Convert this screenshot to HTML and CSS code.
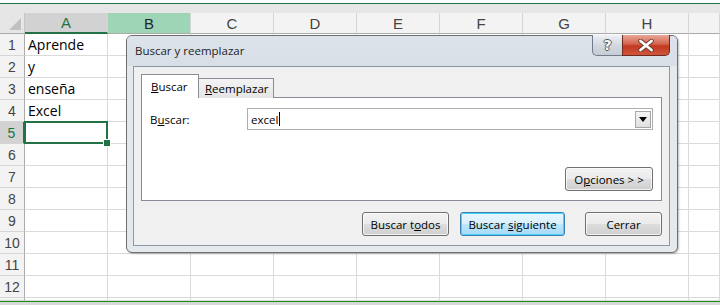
FILE: index.html
```html
<!DOCTYPE html>
<html>
    <head>
        <title>Buscar y reemplazar</title>
        <link rel="stylesheet" href="styles.css">
    </head>
    <body>
        <div class="sheet">
            <div class="ribbon-edge"></div>
            <div class="grid">
                <div class="corner"><span class="tri"></span></div>
                <div class="colhead active">A</div>
                <div class="colhead hover">B</div>
                <div class="colhead">C</div>
                <div class="colhead">D</div>
                <div class="colhead">E</div>
                <div class="colhead">F</div>
                <div class="colhead">G</div>
                <div class="colhead">H</div>
                <div class="colhead"></div>

                <div class="rowhead">1</div><div class="cell">Aprende</div><div class="cell"></div><div class="cell"></div><div class="cell"></div><div class="cell"></div><div class="cell"></div><div class="cell"></div><div class="cell"></div><div class="cell"></div>
                <div class="rowhead">2</div><div class="cell">y</div><div class="cell"></div><div class="cell"></div><div class="cell"></div><div class="cell"></div><div class="cell"></div><div class="cell"></div><div class="cell"></div><div class="cell"></div>
                <div class="rowhead">3</div><div class="cell">enseña</div><div class="cell"></div><div class="cell"></div><div class="cell"></div><div class="cell"></div><div class="cell"></div><div class="cell"></div><div class="cell"></div><div class="cell"></div>
                <div class="rowhead">4</div><div class="cell">Excel</div><div class="cell"></div><div class="cell"></div><div class="cell"></div><div class="cell"></div><div class="cell"></div><div class="cell"></div><div class="cell"></div><div class="cell"></div>
                <div class="rowhead active">5</div><div class="cell selected"></div><div class="cell"></div><div class="cell"></div><div class="cell"></div><div class="cell"></div><div class="cell"></div><div class="cell"></div><div class="cell"></div><div class="cell"></div>
                <div class="rowhead">6</div><div class="cell"></div><div class="cell"></div><div class="cell"></div><div class="cell"></div><div class="cell"></div><div class="cell"></div><div class="cell"></div><div class="cell"></div><div class="cell"></div>
                <div class="rowhead">7</div><div class="cell"></div><div class="cell"></div><div class="cell"></div><div class="cell"></div><div class="cell"></div><div class="cell"></div><div class="cell"></div><div class="cell"></div><div class="cell"></div>
                <div class="rowhead">8</div><div class="cell"></div><div class="cell"></div><div class="cell"></div><div class="cell"></div><div class="cell"></div><div class="cell"></div><div class="cell"></div><div class="cell"></div><div class="cell"></div>
                <div class="rowhead">9</div><div class="cell"></div><div class="cell"></div><div class="cell"></div><div class="cell"></div><div class="cell"></div><div class="cell"></div><div class="cell"></div><div class="cell"></div><div class="cell"></div>
                <div class="rowhead">10</div><div class="cell"></div><div class="cell"></div><div class="cell"></div><div class="cell"></div><div class="cell"></div><div class="cell"></div><div class="cell"></div><div class="cell"></div><div class="cell"></div>
                <div class="rowhead">11</div><div class="cell"></div><div class="cell"></div><div class="cell"></div><div class="cell"></div><div class="cell"></div><div class="cell"></div><div class="cell"></div><div class="cell"></div><div class="cell"></div>
                <div class="rowhead">12</div><div class="cell"></div><div class="cell"></div><div class="cell"></div><div class="cell"></div><div class="cell"></div><div class="cell"></div><div class="cell"></div><div class="cell"></div><div class="cell"></div>
                <div class="rowhead"></div><div class="cell"></div><div class="cell"></div><div class="cell"></div><div class="cell"></div><div class="cell"></div><div class="cell"></div><div class="cell"></div><div class="cell"></div><div class="cell"></div>
            </div>
            <div class="status-edge"></div>
        </div>

        <div class="dialog">
            <div class="titlebar">
                <span class="title">Buscar y reemplazar</span>
                <div class="caption-buttons">
                    <div class="cap help">?</div>
                    <div class="cap close">
                        <svg width="18" height="13" viewBox="0 0 18 13">
                            <path d="M3.5 2 L14.5 11 M14.5 2 L3.5 11" stroke="#6a3a30" stroke-width="4.6" stroke-linecap="round"/>
                            <path d="M3.5 2 L14.5 11 M14.5 2 L3.5 11" stroke="#ffffff" stroke-width="2.8" stroke-linecap="round"/>
                        </svg>
                    </div>
                </div>
            </div>
            <div class="client">
                <div class="tabs">
                    <div class="tab current"><span><u>B</u>uscar</span></div>
                    <div class="tab"><span><u>R</u>eemplazar</span></div>
                </div>
                <div class="panel">
                    <div class="find-row">
                        <label class="label">B<u>u</u>scar:</label>
                        <div class="combo">
                            <span class="value">excel<span class="caret"></span></span>
                            <span class="drop">
                                <svg width="8" height="5" viewBox="0 0 8 5"><path d="M0 0 H8 L4 5 Z" fill="#000"/></svg>
                            </span>
                        </div>
                    </div>
                    <div class="options-row">
                        <div class="button options"><span>O<u>p</u>ciones &gt; &gt;</span></div>
                    </div>
                </div>
                <div class="actions">
                    <div class="button all"><span>Buscar t<u>o</u>dos</span></div>
                    <div class="button next focus"><span>Buscar <u>s</u>iguiente</span></div>
                    <div class="button closebtn"><span>Cerrar</span></div>
                </div>
            </div>
        </div>
    </body>
</html>
```

FILE: styles.css
```css
html, body {
    margin: 0;
    padding: 0;
    background-color: white;
}
body {
    width: 720px;
    height: 305px;
    overflow: hidden;
    position: relative;
    font-family: "Open Sans", sans-serif;
}
.sheet {
    display: flex;
    flex-direction: column;
    height: 305px;
}
.ribbon-edge {
    height: 9px;
    margin-top: 3px;
    border-top: 1px solid #217346;
    background-color: #e6e6e6;
}
.grid {
    display: grid;
    grid-template-columns: 25px repeat(8, 83px) 1fr;
    grid-template-rows: 21px repeat(12, 22px) 3px;
    overflow: hidden;
    height: 288px;
}
.corner {
    background-color: #e6e6e6;
    border-right: 1px solid #c6c6c6;
    border-bottom: 1px solid #ababab;
    position: relative;
}
.tri {
    position: absolute;
    right: 3px;
    bottom: 3px;
    width: 0;
    height: 0;
    border-left: 12px solid transparent;
    border-bottom: 12px solid #c1c1c1;
}
.colhead {
    box-sizing: border-box;
    background-color: #f3f3f3;
    border-right: 1px solid #d5d5d5;
    border-bottom: 1px solid #ababab;
    color: #444;
    font-family: "Liberation Sans", sans-serif;
    font-size: 15px;
    display: flex;
    align-items: center;
    justify-content: center;
}
.colhead.active {
    background-color: #d2d2d2;
    color: #217346;
    border-bottom: 2px solid #217346;
}
.colhead.hover {
    background-color: #9fd5b7;
    color: #262626;
}
.rowhead {
    box-sizing: border-box;
    background-color: #f3f3f3;
    border-right: 1px solid #ababab;
    border-bottom: 1px solid #d5d5d5;
    color: #444;
    font-family: "Liberation Sans", sans-serif;
    font-size: 14px;
    display: flex;
    align-items: center;
    justify-content: center;
}
.rowhead.active {
    background-color: #d2d2d2;
    color: #217346;
    border-right: 2px solid #217346;
}
.cell {
    box-sizing: border-box;
    border-right: 1px solid #dadada;
    border-bottom: 1px solid #dadada;
    font-family: "Open Sans", sans-serif;
    font-size: 14px;
    color: #000;
    padding: 1px 0 0 3px;
    white-space: nowrap;
}
.cell.selected {
    border: 2px solid #217346;
    margin: -1px 0 0 -1px;
    position: relative;
}
.cell.selected::after {
    content: "";
    position: absolute;
    right: -5px;
    bottom: -5px;
    width: 6px;
    height: 6px;
    background-color: #217346;
    border: 1px solid white;
}
.status-edge {
    height: 3px;
    border-top: 1px solid #1e8a1e;
    background-color: #d8d8d8;
}

/* find and replace window */
.dialog {
    position: absolute;
    left: 126px;
    top: 35px;
    width: 552px;
    height: 218px;
    box-sizing: border-box;
    border: 1px solid #707070;
    border-radius: 6px;
    background-color: #e4e9ee;
    box-shadow: 1px 1px 2px rgba(0, 0, 0, 0.25);
    display: flex;
    flex-direction: column;
    font-family: "Open Sans", sans-serif;
    font-size: 11.5px;
    color: #000;
}
.titlebar {
    height: 30px;
    display: flex;
    justify-content: space-between;
    align-items: flex-start;
    background: linear-gradient(#dde3ea, #d7dee6);
    border-radius: 5px 5px 0 0;
}
.title {
    font-size: 11.5px;
    padding: 7px 0 0 8px;
    color: #1e1e1e;
}
.caption-buttons {
    display: flex;
    margin: -1px 7px 0 0;
}
.cap {
    height: 21px;
    box-sizing: border-box;
    border: 1px solid #6f7b8a;
    border-top: none;
    display: flex;
    align-items: center;
    justify-content: center;
}
.cap.help {
    width: 30px;
    border-radius: 0 0 0 5px;
    border-right: none;
    background: linear-gradient(#eef1f5, #d3d9e0 50%, #c5ccd5);
    font-family: "DejaVu Sans", sans-serif;
    font-weight: bold;
    font-size: 14px;
    color: #fbfcfd;
    text-shadow: -1px 0 #4d5866, 1px 0 #4d5866, 0 -1px #4d5866, 0 1px #4d5866;
}
.cap.close {
    width: 48px;
    border-radius: 0 0 5px 0;
    border-color: #6d2a1e;
    background: linear-gradient(#e9a797, #d3654f 45%, #c2391f 55%, #cf553c);
}
.client {
    flex: 1;
    margin: 0 7px 6px 6px;
    border: 1px solid #8d98a6;
    background-color: #f0f0f0;
    display: flex;
    flex-direction: column;
    padding: 8px 7px 9px 7px;
}
.tabs {
    display: flex;
    align-items: flex-end;
    height: 23px;
    margin-bottom: -1px;
    position: relative;
    z-index: 1;
}
.tab {
    box-sizing: border-box;
    height: 20px;
    padding: 2px 6px 0 6px;
    border: 1px solid #898c95;
    border-bottom: none;
    background: linear-gradient(#f3f3f3, #e5e5e5);
    margin-left: -1px;
}
.tab:first-child {
    margin-left: 0;
}
.tab.current {
    height: 24px;
    width: 58px;
    padding: 4px 0 0 9px;
    background-color: #ffffff;
    background-image: none;
}
.tab + .tab {
    width: 76px;
}
.panel {
    height: 104px;
    box-sizing: border-box;
    border: 1px solid #898c95;
    background-color: #ffffff;
    display: flex;
    flex-direction: column;
    justify-content: space-between;
    padding: 10px 8px 9px 8px;
}
.find-row {
    display: flex;
    align-items: center;
}
.label {
    width: 97px;
}
.combo {
    flex: 1;
    height: 22px;
    box-sizing: border-box;
    border: 1px solid #abadb3;
    display: flex;
    align-items: center;
    justify-content: space-between;
    padding: 0 1px 0 3px;
}
.value {
    display: flex;
    align-items: center;
}
.caret {
    width: 1px;
    height: 14px;
    background-color: #000;
    margin-left: 1px;
}
.drop {
    width: 16px;
    height: 17px;
    box-sizing: border-box;
    border: 1px solid #a6a6a6;
    background: linear-gradient(#f4f4f4, #e0e0e0);
    display: flex;
    align-items: center;
    justify-content: center;
}
.options-row {
    display: flex;
    justify-content: flex-end;
}
.button {
    box-sizing: border-box;
    height: 24px;
    border: 1px solid #707070;
    border-radius: 3px;
    background: linear-gradient(#f2f2f2, #ebebeb 49%, #dddddd 51%, #cfcfcf);
    box-shadow: inset 0 0 0 1px rgba(255, 255, 255, 0.7);
    display: flex;
    align-items: center;
    justify-content: center;
    white-space: nowrap;
    cursor: pointer;
}
.button.options {
    width: 88px;
}
.actions {
    display: flex;
    justify-content: flex-end;
    margin-top: 11px;
}
.button.all {
    width: 87px;
}
.button.next {
    width: 105px;
    margin-left: 11px;
}
.button.closebtn {
    width: 77px;
    margin-left: 20px;
}
.button.focus {
    border-color: #3c7fb1;
    box-shadow: inset 0 0 0 1px #48d3fb;
    background: linear-gradient(#eaf6fd, #d9f0fc 49%, #bee6fd 51%, #a7d9f5);
}
```
